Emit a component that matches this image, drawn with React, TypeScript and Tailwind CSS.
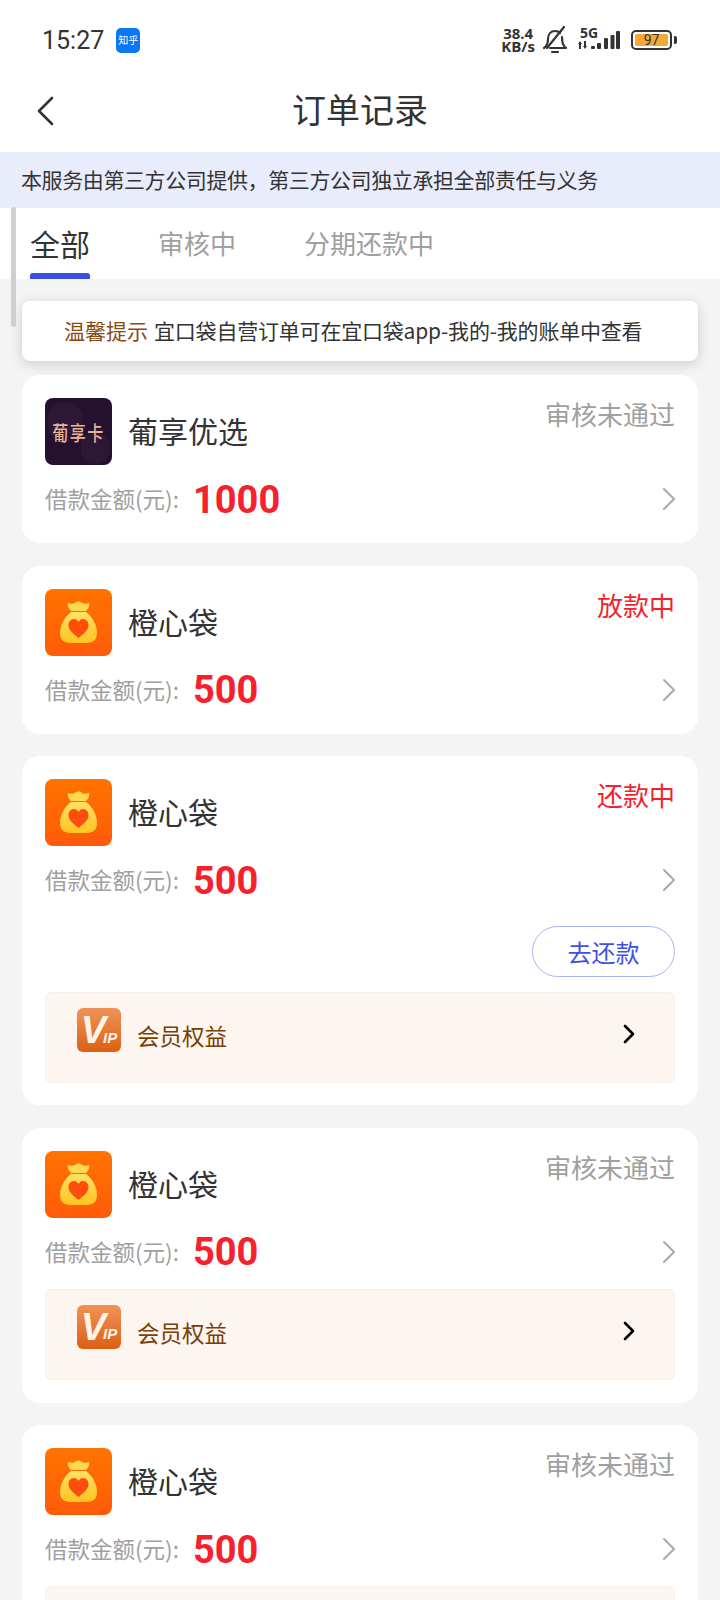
const cjk = { fontFamily: '"Noto Sans CJK SC", sans-serif' };

function Bag() {
  return (
    <div className="w-[67px] h-[67px] rounded-[8px] bg-gradient-to-b from-[#ff7300] to-[#ff5a0a] shrink-0 flex items-center justify-center">
      <svg width="67" height="67" viewBox="0 0 67 67">
        <defs>
          <linearGradient id="bagfill" x1="0" y1="0" x2="0" y2="1">
            <stop offset="0" stopColor="#ffe066" />
            <stop offset="1" stopColor="#ffc41f" />
          </linearGradient>
        </defs>
        <path d="M23 14c3 1 5 1 7 0 2-2 5-2 7 0 2 1 4 1 7 0 1 3-1 6-3 8H26c-2-2-4-5-3-8z" fill="#ffd84d" />
        <path d="M26 23h15c7 5 11 14 11 21 0 8-5 10-12 10H27c-7 0-12-2-12-10 0-7 4-16 11-21z" fill="url(#bagfill)" />
        <path d="M33.500 49c-6-5-10-8-10-13 0-3 2-6 5.500-6 2 0 3.500 1 4.500 3 1-2 2.500-3 4.500-3 3.500 0 5.500 3 5.500 6 0 5-4 8-10 13z" fill="#ff4d0d" />
      </svg>
    </div>
  );
}

function CardIcon() {
  return (
    <div className="relative w-[67px] h-[67px] rounded-[8px] bg-[#24112f] shrink-0 overflow-hidden flex items-center justify-center">
      <div className="absolute left-[2px] top-[4px] w-[36px] h-[40px] rounded-full bg-[#2c1836]" />
      <div className="absolute left-[36px] top-[34px] w-[28px] h-[32px] rounded-full bg-[#2c1836]" />
      <span className="relative text-[16px] leading-none font-medium text-[#e8b48e] tracking-[1.500px] scale-y-125" style={cjk}>葡享卡</span>
    </div>
  );
}

function VipRow() {
  return (
    <div className="h-[91px] rounded-[6px] bg-[#fdf5ef] border border-[#fbeee4] pl-[31px] pr-[38px] pt-[15px] flex items-start">
      <div className="w-[44px] h-[44px] rounded-[6px] bg-gradient-to-b from-[#ee9355] to-[#dc5f0e] flex items-center justify-center shrink-0 overflow-hidden">
        <span className="italic font-bold text-[#fff3e8] text-[38px] leading-none -mr-[3px]" style={{ fontFamily: '"Liberation Sans", sans-serif' }}>V</span>
        <span className="italic font-bold text-[#fff3e8] text-[15px] leading-none mt-[14px]" style={{ fontFamily: '"Liberation Sans", sans-serif' }}>IP</span>
      </div>
      <span className="ml-[16px] mt-[12px] text-[22.500px] leading-[30px] text-[#7a3e07]">会员权益</span>
      <svg className="ml-auto mt-[16px]" width="14" height="20" viewBox="0 0 14 20" fill="none">
        <path d="M3 2l8 8-8 8" stroke="#000" strokeWidth="2.600" strokeLinecap="round" strokeLinejoin="round" />
      </svg>
    </div>
  );
}

function OrderCard({ name, status, statusColor, amount, icon, button, vip }: {
  name: string; status: string; statusColor: string; amount: string; icon?: "card"; button?: boolean; vip?: boolean;
}) {
  return (
    <div className={`bg-white rounded-[18px] px-[23px] pt-[23px] ${vip && !button ? "pb-[23px]" : "pb-[22px]"}`}>
      <div className="flex items-start">
        {icon === "card" ? <CardIcon /> : <Bag />}
        <span className="ml-[16px] mt-[12px] text-[30px] leading-[40px] text-[#333]">{name}</span>
        <span className={`ml-auto -mt-[2px] text-[26px] leading-[36px] ${statusColor}`}>{status}</span>
      </div>
      <div className="mt-[12px] h-[44px] flex items-center">
        <span className="text-[22.500px] text-[#a0a0a0] w-[148px]">借款金额(元):</span>
        <span className="text-[38px] font-bold text-[#f5222d] leading-none mt-[1px]" style={{ fontFamily: "Roboto, sans-serif" }}>{amount}</span>
        <svg className="ml-auto -mr-[2px]" width="15" height="24" viewBox="0 0 15 24" fill="none">
          <path d="M2 2l10 10L2 22" stroke="#aaa" strokeWidth="2" strokeLinecap="round" strokeLinejoin="round" />
        </svg>
      </div>
      {button && (
        <div className="flex justify-end mt-[24px]">
          <div className="w-[143px] h-[51px] rounded-full border border-[#aab4ec] flex items-center justify-center text-[24px] text-[#3f51e0]">去还款</div>
        </div>
      )}
      {vip && <div className="mt-[15px]"><VipRow /></div>}
    </div>
  );
}

export default function App() {
  return (
    <div className="relative w-[720px] h-[1600px] overflow-hidden bg-[#f4f4f4]" style={cjk}>
      {/* status bar */}
      <div className="h-[80px] bg-white flex items-center pl-[42px] pr-[43px]">
        <span className="text-[25px] text-[#333] leading-none" style={{ fontFamily: "Roboto, sans-serif" }}>15:27</span>
        <div className="ml-[12px] w-[24px] h-[25px] rounded-[5px] bg-[#0a78f5] flex items-center justify-center text-[10px] text-white leading-none">知乎</div>
        <div className="ml-auto flex items-center">
          <div className="text-[15px] font-bold leading-[13px] text-[#333] text-center" style={{ fontFamily: '"Open Sans", sans-serif' }}>
            <div>38.4</div>
            <div>KB/s</div>
          </div>
          <svg className="ml-[7px]" width="26" height="28" viewBox="0 0 26 28" fill="none" stroke="#333" strokeWidth="2.200" strokeLinecap="round" strokeLinejoin="round">
            <path d="M2 22c3-2 4-4 4-9 0-5 3-8 7-8 2 0 4 .8 5 2" />
            <path d="M20 11c0 6 1 9 4 11H8" />
            <path d="M22 1L5 22" />
            <path d="M10 26h6" />
          </svg>
          <div className="relative ml-[10px] w-[42px] h-[28px]">
            <span className="absolute left-[2px] top-0 text-[14px] font-bold leading-[13px] text-[#333]" style={{ fontFamily: '"Open Sans", sans-serif' }}>5G</span>
            <svg className="absolute left-0 top-0" width="42" height="28" viewBox="0 0 42 28" fill="#333">
              <path d="M0 18l2-3 2 3H3v5H1v-5H0z" />
              <path d="M5 20h1v-5h2v5h1l-2 3-2-3z" />
              <rect x="13" y="20" width="4" height="3" rx="1" />
              <rect x="19" y="17" width="4" height="6" rx="1" />
              <rect x="26" y="12" width="4" height="11" rx="1" />
              <rect x="32.500" y="9" width="4" height="14" rx="1" />
              <rect x="38" y="5" width="4" height="18" rx="1" />
            </svg>
          </div>
          <div className="ml-[11px] w-[41px] h-[20px] rounded-[5px] border-2 border-[#333] p-[2px] flex">
            <div className="flex-1 bg-[#f5a833] rounded-[2px] flex items-center justify-center text-[14px] leading-none text-[#333]" style={{ fontFamily: "Roboto, sans-serif" }}>97</div>
          </div>
          <div className="ml-[2px] w-[3px] h-[8px] rounded-r-[2px] bg-[#333]" />
        </div>
      </div>

      {/* nav */}
      <div className="h-[72px] bg-white flex items-center justify-center relative">
        <svg className="absolute left-[36px] top-[15px]" width="20" height="32" viewBox="0 0 20 32" fill="none">
          <path d="M16 3L3 16l13 13" stroke="#333" strokeWidth="2.600" strokeLinecap="round" strokeLinejoin="round" />
        </svg>
        <span className="text-[34px] text-[#333] leading-none -mt-[14px]">订单记录</span>
      </div>

      <div className="h-[56px] bg-[#e9ecfb] pl-[21px] flex items-center text-[21px] text-[#333] tracking-[-0.4px]">本服务由第三方公司提供，第三方公司独立承担全部责任与义务</div>

      {/* tabs */}
      <div className="h-[71px] bg-white pl-[30px] flex items-start">
        <div className="flex flex-col items-start">
          <span className="text-[30px] leading-[40px] mt-[15px] text-[#333]">全部</span>
          <div className="mt-[10px] w-[60px] h-[6px] rounded-t-[3px] bg-[#3850e0]" />
        </div>
        <span className="ml-[68px] mt-[16px] text-[26px] leading-[38px] text-[#a0a0a0]">审核中</span>
        <span className="ml-[68px] mt-[16px] text-[26px] leading-[38px] text-[#a0a0a0]">分期还款中</span>
      </div>

      {/* list */}
      <div className="px-[22px] pt-[22px] flex flex-col gap-[22.500px]">
        <div className="-mb-[8.500px] h-[60px] bg-white rounded-[8px] shadow-[0_3px_14px_rgba(0,0,0,0.16)] pl-[42px] flex items-center text-[21px]">
          <span className="text-[#8a4a12]">温馨提示</span>
          <span className="ml-[6px] text-[#333] tracking-[-0.2px]">宜口袋自营订单可在宜口袋app-我的-我的账单中查看</span>
        </div>
        <OrderCard name="葡享优选" status="审核未通过" statusColor="text-[#a0a0a0]" amount="1000" icon="card" />
        <OrderCard name="橙心袋" status="放款中" statusColor="text-[#f5222d]" amount="500" />
        <OrderCard name="橙心袋" status="还款中" statusColor="text-[#f5222d]" amount="500" button vip />
        <OrderCard name="橙心袋" status="审核未通过" statusColor="text-[#a0a0a0]" amount="500" vip />
        <OrderCard name="橙心袋" status="审核未通过" statusColor="text-[#a0a0a0]" amount="500" vip />
      </div>

      {/* scroll indicator */}
      <div className="absolute left-[11px] top-[207px] w-[5px] h-[120px] rounded-full bg-[#cfcfcf]" />
    </div>
  );
}
